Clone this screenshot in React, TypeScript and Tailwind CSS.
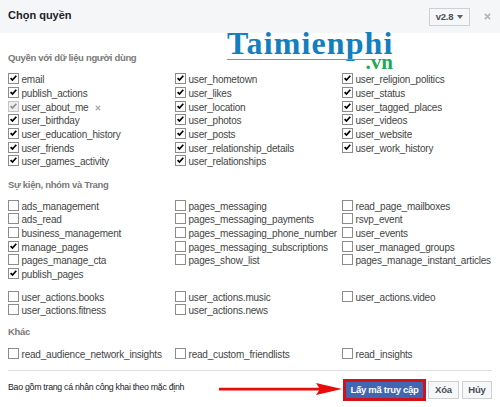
type Item = { name: string; on?: boolean; muted?: boolean };

const on = (...names: string[]): Item[] => names.map((name) => ({ name, on: true }));
const off = (...names: string[]): Item[] => names.map((name) => ({ name }));

const userData: Item[][] = [
  [
    ...on('email', 'publish_actions'),
    { name: 'user_about_me', on: true, muted: true },
    ...on('user_birthday', 'user_education_history', 'user_friends', 'user_games_activity'),
  ],
  on('user_hometown', 'user_likes', 'user_location', 'user_photos', 'user_posts', 'user_relationship_details', 'user_relationships'),
  on('user_religion_politics', 'user_status', 'user_tagged_places', 'user_videos', 'user_website', 'user_work_history'),
];

const pages: Item[][] = [
  [...off('ads_management', 'ads_read', 'business_management'), ...on('manage_pages'), ...off('pages_manage_cta'), ...on('publish_pages')],
  off('pages_messaging', 'pages_messaging_payments', 'pages_messaging_phone_number', 'pages_messaging_subscriptions', 'pages_show_list'),
  off('read_page_mailboxes', 'rsvp_event', 'user_events', 'user_managed_groups', 'pages_manage_instant_articles'),
];

const actions: Item[][] = [
  off('user_actions.books', 'user_actions.fitness'),
  off('user_actions.music', 'user_actions.news'),
  off('user_actions.video'),
];

const other: Item[][] = [off('read_audience_network_insights'), off('read_custom_friendlists'), off('read_insights')];

function Cross({ className }: { className: string }) {
  return (
    <svg viewBox="0 0 8 8" className={className} fill="none" stroke="currentColor">
      <path d="M1 1l6 6M7 1L1 7" />
    </svg>
  );
}

function Box({ on, muted }: { on?: boolean; muted?: boolean }) {
  const tone = muted ? 'border-[#c4c4c4] bg-[#eeeeee] text-[#8c8c8c]' : 'border-[#8c8c8c] bg-white text-black';
  return (
    <span className={`-mt-px flex size-[11px] shrink-0 items-center justify-center border ${tone}`}>
      {on && (
        <svg viewBox="0 0 9 9" className="size-[9px]" fill="none" stroke="currentColor" strokeWidth="1.7">
          <path d="M1.6 4.1l1.9 2L7.3 1.7" />
        </svg>
      )}
    </span>
  );
}

function Grid({ columns }: { columns: Item[][] }) {
  return (
    <div className="grid grid-cols-[167px_167px_150px]">
      {columns.map((items, i) => (
        <ul key={i}>
          {items.map((item) => (
            <li key={item.name} className="flex h-[13.7px] items-center whitespace-nowrap text-[10px] leading-[13px] tracking-[-0.02em] text-[#454545]">
              <Box on={item.on} muted={item.muted} />
              <span className="ml-[2.5px] mt-px">{item.name}</span>
              {item.muted && <Cross className="ml-[7px] mt-[3px] size-[6px] stroke-[1.5] text-[#a8a8a8]" />}
            </li>
          ))}
        </ul>
      ))}
    </div>
  );
}

function Title({ children }: { children: string }) {
  return <h2 className="h-[14px] whitespace-nowrap text-[9.5px] font-bold leading-[14px] tracking-[-0.33px] text-[#7a7a7a]">{children}</h2>;
}

export default function App() {
  return (
    <div className="relative h-[407px] w-[500px] overflow-hidden bg-white font-['Liberation_Sans',Arial,sans-serif]">
      <header className="flex h-[33px] items-center bg-[#f5f6f7] pl-[8px] pr-[8px]">
        <h1 className="-mt-[3px] text-[11px] font-bold text-[#1d2129]">Chọn quyền</h1>
        <button className="ml-auto mt-px flex h-[18px] w-[41px] items-center justify-center gap-[4px] border border-[#ced0d4] bg-[#f6f7f9] text-[9.5px] font-bold tracking-[-0.02em] text-[#4b4f56]">
          v2.8
          <span className="border-x-[3px] border-t-[4px] border-x-transparent border-t-[#5b5f66]" />
        </button>
        <Cross className="ml-[14px] mr-px size-[7px] stroke-[1.8] text-[#b3b4b6]" />
      </header>

      <main className="pl-[8px]">
        <div className="pt-[18px]">
          <Title>Quyền với dữ liệu người dùng</Title>
        </div>
        <div className="pt-[7.5px]">
          <Grid columns={userData} />
        </div>
        <div className="pt-[9.5px]">
          <Title>Sự kiện, nhóm và Trang</Title>
        </div>
        <div className="pt-[7px]">
          <Grid columns={pages} />
        </div>
        <div className="pt-[9px]">
          <Grid columns={actions} />
        </div>
        <div className="pt-[8px]">
          <Title>Khác</Title>
        </div>
        <div className="pt-[8px]">
          <Grid columns={other} />
        </div>
      </main>

      <footer className="ml-[8px] mt-[9px] flex h-[37px] w-[484px] items-center border-t border-[#dcdee2]">
        <p className="-mt-[2px] whitespace-nowrap text-[8.8px] tracking-[-0.29px] text-[#1d2129]">Bao gồm trang cá nhân công khai theo mặc định</p>
        <svg viewBox="0 0 124 14" className="-mt-[1px] ml-auto h-[14px] w-[124px]" fill="#e80c0c">
          <path d="M0 5.8h101v2.6H0zM97 1l26 6-26 6 4-6z" />
        </svg>
        <button className="mt-px h-[22px] w-[83px] whitespace-nowrap border-[3px] border-[#d0121b] bg-[#4267b2] text-[9.5px] font-bold leading-[16px] tracking-[-0.28px] text-white">
          Lấy mã truy cập
        </button>
        <button className="ml-[2px] mt-px h-[18px] w-[31px] border border-[#ced0d4] bg-[#f6f7f9] text-[9.5px] font-bold leading-[16px] tracking-[-0.2px] text-[#4b4f56]">Xóa</button>
        <button className="ml-[3px] mt-px h-[18px] w-[30px] border border-[#ced0d4] bg-[#f6f7f9] text-[9.5px] font-bold leading-[16px] tracking-[-0.2px] text-[#4b4f56]">Hủy</button>
      </footer>

      <div className="absolute left-[227px] top-[27px] h-[48px] w-[168px] font-['Liberation_Serif',serif] font-bold">
        <div className="whitespace-nowrap text-[32px] leading-[32px] tracking-[0.035em] text-[#127fc0]">Taimienphi</div>
        <div className="absolute left-0 top-[32px] h-px w-[145px] bg-[#5c9fce]" />
        <div className="absolute right-[2px] top-[25px] text-[21px] leading-[21px] text-[#22a956]">.vn</div>
      </div>
    </div>
  );
}
